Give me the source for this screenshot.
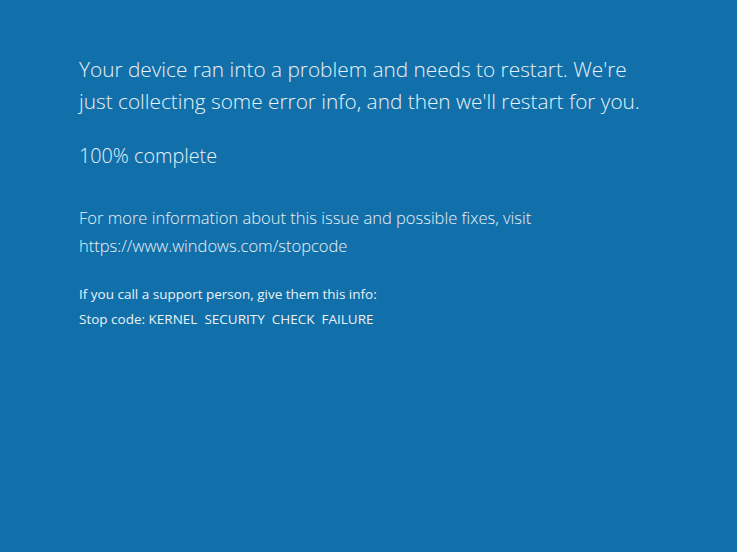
export default function App() {
  return (
    <div
      className="w-[737px] h-[552px] bg-[#1170aa] text-[#eaf1f7] overflow-hidden"
      style={{ fontFamily: '"Open Sans", "Noto Sans", sans-serif' }}
    >
      <div className="pl-[79px] pt-[53px]">
        <p className="text-[20.8px] leading-[32px] font-light">
          Your device ran into a problem and needs to restart. We're
          <br />
          just collecting some error info, and then we'll restart for you.
        </p>
        <p className="mt-[23px] text-[19.8px] leading-[32px] font-light">100% complete</p>
        <p className="mt-[32px] text-[16.5px] leading-[28px] font-light">
          For more information about this issue and possible fixes, visit
          <br />
          https://www.windows.com/stopcode
        </p>
        <p className="mt-[22px] text-[13.5px] leading-[25px] whitespace-pre">
          {'If you call a support person, give them this info:\nStop code: KERNEL  SECURITY  CHECK  FAILURE'}
        </p>
      </div>
    </div>
  )
}
